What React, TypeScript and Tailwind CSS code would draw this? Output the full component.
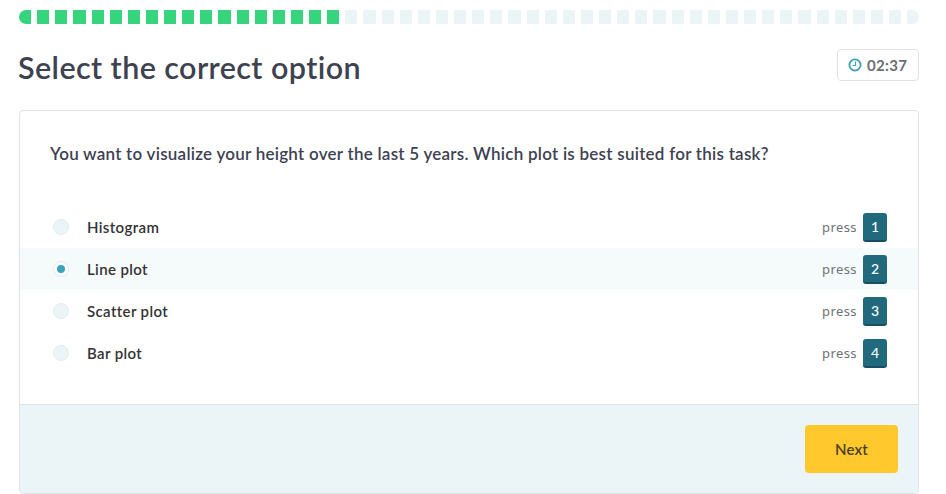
const options = ['Histogram', 'Line plot', 'Scatter plot', 'Bar plot'];
const selected = 1;
const total = 50;
const done = 18;

function Clock() {
  return (
    <svg className="size-[14px] shrink-0" viewBox="0 0 14 14" fill="none" stroke="#3aa0b8">
      <circle cx="7" cy="7" r="5.6" strokeWidth="1.8" />
      <path d="M7.5 3.5V7.5H4.5" strokeWidth="1" />
    </svg>
  );
}

export default function App() {
  return (
    <main className="flex h-[494px] w-[946px] flex-col bg-white pl-[19px] pr-[27px] pt-[10px] font-['Lato',sans-serif] text-[#3d4251]">
      <div className="flex h-[14px] w-[900px] shrink-0 gap-[6px] overflow-hidden rounded-full">
        {Array.from({ length: total }, (_, i) => (
          <div key={i} className={`flex-1 ${i < done ? 'bg-[#36d57d]' : 'bg-[#ebf4f7]'}`} />
        ))}
      </div>
      <header className="mt-[25px] flex h-[32px] shrink-0 items-center justify-between">
        <h1 className="-ml-px pt-[4px] text-[30.5px] leading-[38px] font-semibold tracking-[0.41px] whitespace-nowrap">Select the correct option</h1>
        <div className="flex h-[32px] w-[82px] items-center gap-[5px] rounded-[4px] border border-[#e0e3e6] pl-[10px] text-[15px] font-bold tracking-[0.3px] text-[#686f75]">
          <Clock />
          <span>02:37</span>
        </div>
      </header>
      <section className="mt-[29px] flex h-[384px] shrink-0 flex-col overflow-hidden rounded-[4px] border border-[#dfe3e6]">
        <h2 className="h-[95px] pl-[30px] pt-[31px] text-[17px] leading-[24px] font-semibold tracking-[0.25px] whitespace-nowrap">
          You want to visualize your height over the last 5 years. Which plot is best suited for this task?
        </h2>
        <div className="flex flex-col">
          {options.map((name, i) => (
            <div key={name} className={`flex h-[42px] items-center pl-[33px] pr-[31px] ${i === selected ? 'bg-[#f5fafb]' : ''}`}>
              <div className={`flex size-[16px] items-center justify-center rounded-full border ${i === selected ? 'border-[#deebef] bg-white' : 'border-[#e2ecef] bg-[#ebf4f7]'}`}>
                {i === selected && <div className="size-[8px] rounded-full bg-[#3aa3bd]" />}
              </div>
              <span className="ml-[18px] text-[15px] font-semibold tracking-[0.37px] text-[#333]">{name}</span>
              <span className="ml-auto pt-px font-['Noto_Sans',sans-serif] text-[13px] tracking-[0.4px] text-[#6f7276]">press</span>
              <kbd className="ml-[6px] flex h-[29px] w-[24px] items-center justify-center rounded-[3px] border-b-2 border-[#174f62] bg-[#21697d] font-['Lato',sans-serif] text-[14px] font-medium text-white">{i + 1}</kbd>
            </div>
          ))}
        </div>
        <footer className="mt-auto flex h-[89px] items-center justify-end border-t border-[#dce4e7] bg-[#ebf4f7] pr-[20px]">
          <button className="h-[48px] w-[93px] rounded-[4px] bg-[#ffc82d] text-[15px] font-semibold tracking-[0.2px] text-[#4a3f2b]">Next</button>
        </footer>
      </section>
    </main>
  );
}
